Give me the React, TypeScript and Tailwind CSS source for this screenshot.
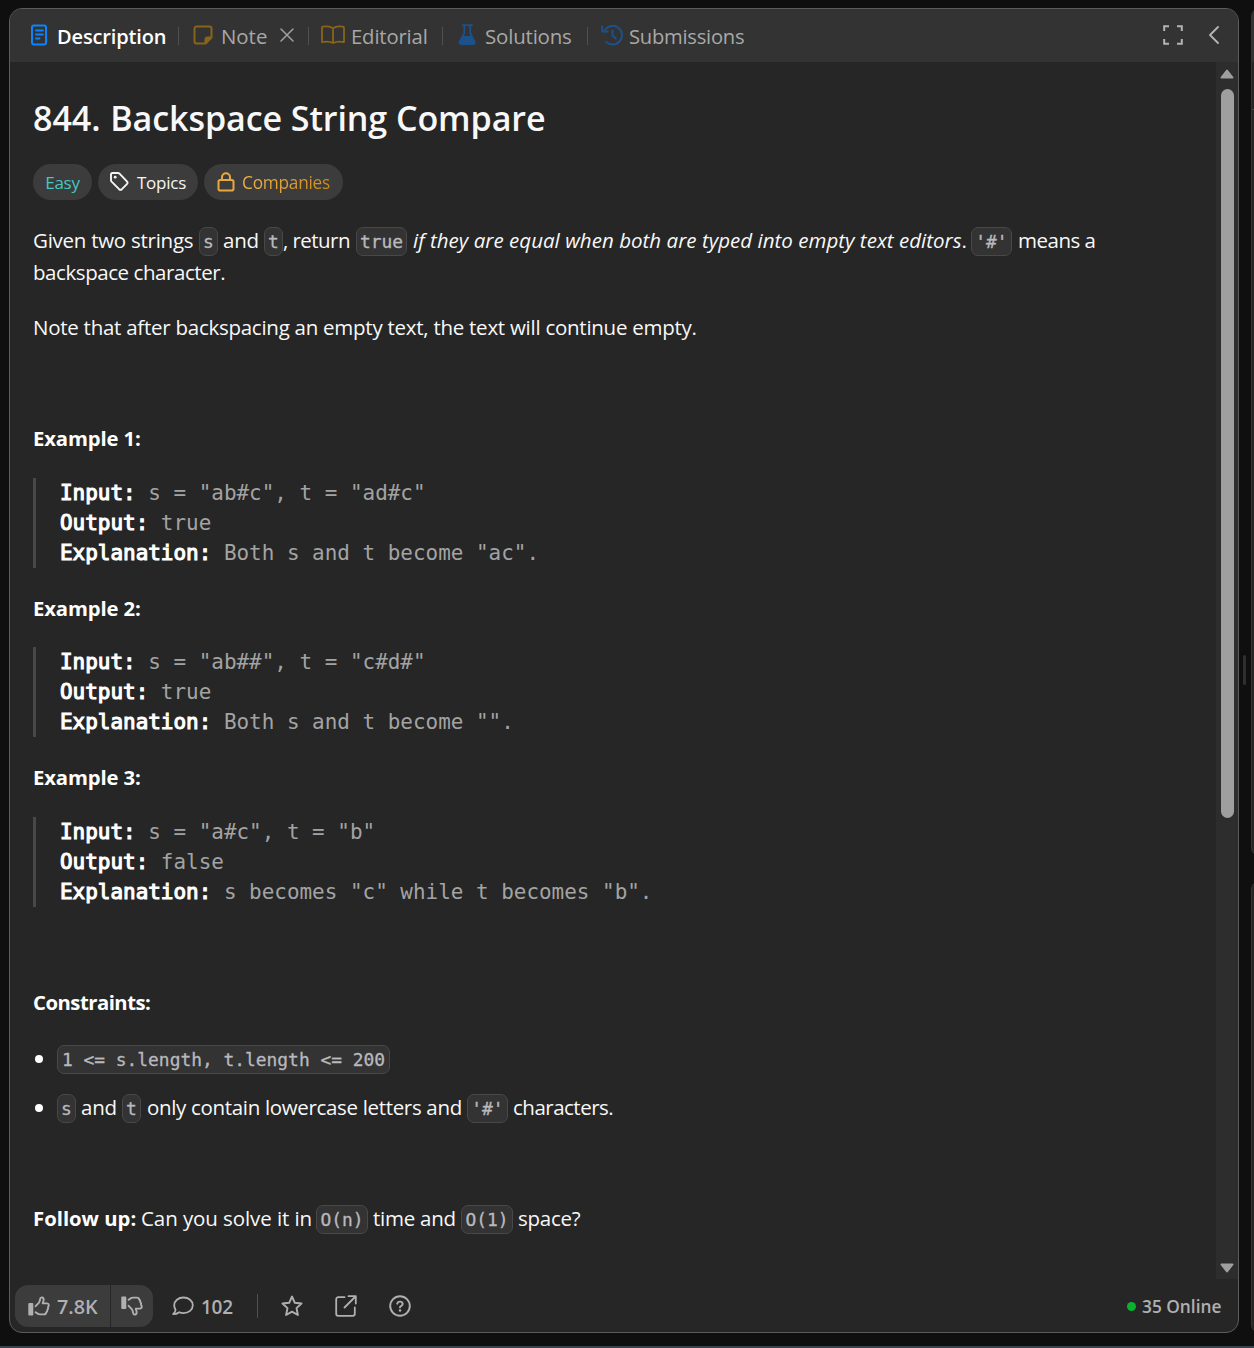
import React from "react";

type Kids = { children: React.ReactNode; className?: string };

const Code = ({ children, className = "" }: Kids) => (
  <code
    className={`mt-[2px] inline-flex h-[29px] shrink-0 items-center justify-center rounded-[7px] border border-[#484848] bg-[#333333] pt-[2px] font-['DejaVu_Sans_Mono',monospace] text-[17.9px] leading-none tracking-normal text-[#b9b9be] [-webkit-text-stroke:0.3px_#b9b9be] whitespace-pre ${className}`}
  >
    {children}
  </code>
);

const Line = ({ children, className = "" }: Kids) => (
  <div className={`flex h-8 items-center whitespace-pre leading-8 ${className}`}>{children}</div>
);

const Heading = ({ children, className = "" }: Kids) => (
  <p className={`h-8 text-[20.3px] font-bold leading-8 tracking-[-0.12px] text-white ${className}`}>{children}</p>
);

const Example = ({ rows, className = "" }: { rows: [string, string][]; className?: string }) => (
  <pre
    className={`h-[90px] border-l-[3px] border-[#484848] pl-6 font-['DejaVu_Sans_Mono',monospace] text-[20.95px] leading-[30px] tracking-normal text-[#a3a3a3] ${className}`}
  >
    {rows.map(([label, value]) => (
      <div key={label}>
        <span className="text-white [-webkit-text-stroke:1.1px_#fff]">{label}</span> {value}
      </div>
    ))}
  </pre>
);

const Sep = ({ className = "" }: { className?: string }) => (
  <div className={`h-[18px] w-px shrink-0 bg-[#515151] ${className}`} />
);

const Svg = ({ w, h, className = "", children }: Kids & { w: number; h: number }) => (
  <svg
    width={w}
    height={h}
    viewBox={`0 0 ${w} ${h}`}
    fill="none"
    stroke="currentColor"
    strokeWidth="2"
    strokeLinecap="round"
    strokeLinejoin="round"
    className={`shrink-0 ${className}`}
  >
    {children}
  </svg>
);

const Tab = ({ children, className = "" }: Kids) => (
  <span className={`shrink-0 whitespace-nowrap pt-[2px] text-[#a8a8a8] ${className}`}>{children}</span>
);

const ThumbUp = ({ className = "" }: { className?: string }) => (
  <Svg w={22} h={20} className={className}>
    <rect x="0.3" y="7" width="5" height="12.5" rx="1" fill="currentColor" stroke="none" />
    <path
      d="M7.6 10.2 L11 6.6 Q11.9 5.2 12 3.4 Q12.4 1.1 14.2 1.4 Q16 2 15.6 4.4 L14.7 7.4 H19 Q20.8 7.6 20.8 9.2 Q20.8 10.4 20 11 Q20.6 13 19.3 13.9 Q19.6 15.8 18.2 16.4 Q18 18.4 16 18.4 H12.2 Q10.6 18.3 9.4 17.4 L7.6 16.2"
      strokeWidth="1.9"
    />
  </Svg>
);

function Header() {
  return (
    <header className="flex h-[53px] shrink-0 items-center bg-[#333333] pl-[21px] pr-[18px]">
      <Svg w={17} h={22} className="-mt-[2px] text-[#0a84ff]">
        <rect x="1" y="1.5" width="14" height="19" rx="2" />
        <path d="M5 6.5h7M5 10.5h7M5 14.5h3.5" strokeWidth="1.8" />
      </Svg>
      <Tab className="ml-[9px] w-[121px] text-[20px] font-semibold tracking-[-0.15px] !text-white">Description</Tab>
      <Sep />
      <Svg w={20} h={20} className="ml-[14px] -mt-[1px] text-[#896419]">
        <path d="M3.5 1.5h13a2 2 0 0 1 2 2v9l-6 6h-9a2 2 0 0 1-2-2v-13a2 2 0 0 1 2-2z" />
        <path d="M12.5 18v-3.5a2 2 0 0 1 2-2H18z" fill="currentColor" />
      </Svg>
      <Tab className="ml-[8px] w-[59px] text-[20.4px]">Note</Tab>
      <Svg w={14} h={14} className="-mt-[1px] text-[#a0a0a0]">
        <path d="M1 1l12 12M13 1L1 13" strokeWidth="1.5" />
      </Svg>
      <Sep className="ml-[14px]" />
      <Svg w={24} h={20} className="ml-[12px] -mt-[1px] text-[#896419]">
        <path
          d="M12 3.2v14.6M12 3.2C9.5 1.4 5 1.2 2.2 1.7a1.2 1.2 0 0 0-1.2 1.2v14.2c3.5-.8 8-.6 11 .9 3-1.5 7.5-1.7 11-.9V2.9a1.2 1.2 0 0 0-1.2-1.2C19 1.2 14.5 1.4 12 3.2z"
          strokeWidth="1.8"
        />
      </Svg>
      <Tab className="ml-[6px] w-[91px] text-[20.3px] tracking-[-0.15px]">Editorial</Tab>
      <Sep />
      <Svg w={18} h={22} className="ml-[15px] -mt-[2px] text-[#1d5189]">
        <path d="M4.5 1.2h9.5M6.3 1.5v7.5L1.3 18.5M12.2 1.5v7.5l4.7 9.5" strokeWidth="1.8" />
        <path d="M4.6 12.5h9.2l3 5.8q.7 2.3-1.6 2.3H2.900q-2.300 0-1.600-2.300z" fill="currentColor" strokeWidth="1" />
      </Svg>
      <Tab className="ml-[9px] w-[102px] text-[20.5px] tracking-[-0.2px]">Solutions</Tab>
      <Sep />
      <Svg w={22} h={22} className="ml-[13px] -mt-[2px] text-[#1d5189]">
        <path d="M4.3 5.5a9.300 9.300 0 1 1 1.100 12.500M1.200 2.300v5.300h5.500M11.500 6.500v5l3.300 3" />
      </Svg>
      <Tab className="ml-[6px] text-[20.2px] tracking-[-0.25px]">Submissions</Tab>
      <Svg w={20} h={20} className="ml-auto -mt-[1px] text-[#b4b4b4]">
        <path d="M1.200 6V1.200H6M14 1.200h4.800V6M18.800 14v4.800H14M6 18.800H1.200V14" strokeLinecap="butt" strokeLinejoin="miter" />
      </Svg>
      <Svg w={12} h={18} className="ml-[25px] -mt-[1px] text-[#b4b4b4]">
        <path d="M10 1L2 9l8 8" strokeWidth="1.8" />
      </Svg>
    </header>
  );
}

function Footer() {
  return (
    <footer className="flex h-[53px] shrink-0 items-start pl-[5px] pr-[17px] pt-[6px] text-[#b0b0b0]">
      <div className="flex h-[42px] overflow-hidden rounded-[13px]">
        <div className="flex w-[95px] items-center bg-[#3c3c3c] pl-[13px]">
          <ThumbUp />
          <span className="ml-[7px] pt-[2px] text-[19.8px] font-semibold">7.8K</span>
        </div>
        <div className="ml-px flex w-[42px] items-center bg-[#3c3c3c] pl-[10px]">
          <ThumbUp className="-scale-y-100" />
        </div>
      </div>
      <div className="flex h-[42px] flex-1 items-center">
        <Svg w={22} h={20} className="ml-[19px]">
          <path
            d="M11.500 1.500c5.200 0 9.300 3.400 9.300 7.800s-4.100 7.800-9.300 7.800c-1.600 0-3-.3-4.300-.9-1.500 1.200-3.500 2-6 2 1.200-1.200 2.200-2.800 2.400-4.300-.9-1.300-1.400-2.900-1.400-4.600 0-4.400 4.100-7.800 9.300-7.800z"
            strokeWidth="1.8"
          />
        </Svg>
        <span className="ml-[7px] w-[56px] pt-[2px] text-[19px] font-semibold tracking-[-0.3px]">102</span>
        <div className="h-6 w-px bg-[#515151]" />
        <Svg w={22} h={22} className="ml-[23px]">
          <path d="M11 1.5l2.8 6.3 6.7.7-5 4.6 1.400 6.900L11 16.600 5.100 20l1.400-6.900-5-4.600 6.700-.7z" strokeWidth="1.9" />
        </Svg>
        <Svg w={22} h={22} className="ml-[32px]">
          <path
            d="M9.500 2.200H3.200a2 2 0 0 0-2 2v14.600a2 2 0 0 0 2 2h14.600a2 2 0 0 0 2-2v-6.300M13.500 1.200h7.300v7.300M20.500 1.500L9.500 12.500"
            strokeWidth="1.8"
          />
        </Svg>
        <Svg w={22} h={22} className="ml-[32px]">
          <circle cx="11" cy="11" r="9.8" strokeWidth="1.9" />
          <path d="M8.300 8.700q.3-2.100 2.700-2.100t2.700 2.200q0 1.300-1.400 2-1.300.6-1.300 1.600" strokeWidth="1.9" />
          <circle cx="11" cy="15.4" r="1.25" fill="currentColor" stroke="none" />
        </Svg>
        <span className="ml-auto mr-[6px] h-[9px] w-[9px] rounded-full bg-[#09b32d]" />
        <span className="w-[79px] whitespace-nowrap pt-[2px] text-[17.3px] font-semibold">35 Online</span>
      </div>
    </footer>
  );
}

function Scrollbar() {
  return (
    <div className="flex w-[22px] shrink-0 flex-col items-center bg-[#2d2d2d] pt-[6px] pb-[5px] text-[#9f9f9f]">
      <Svg w={16} h={12}>
        <path d="M8 2.500L13.500 9.500H2.500z" fill="currentColor" />
      </Svg>
      <div className="mt-[9px] h-[729px] w-[13px] rounded-full bg-[#9f9f9f]" />
      <Svg w={16} h={12} className="mt-auto">
        <path d="M8 9.500L13.500 2.500H2.500z" fill="currentColor" />
      </Svg>
    </div>
  );
}

function Tags() {
  return (
    <div className="mt-[24px] flex h-9 gap-[6px] text-[17px]">
      <span className="flex w-[59px] items-center justify-center rounded-full bg-[#3c3c3c] pt-[2px] text-[#46c6c2]">
        Easy
      </span>
      <span className="flex w-[100px] items-center rounded-full bg-[#3c3c3c] pl-[12px] text-[#f5f5f5]">
        <Svg w={19} h={19} className="-mt-[1px]">
          <path
            d="M1 2.400v5.800q0 .8.6 1.500l7.500 7.500q1.400 1.300 2.800 0l5-5q1.300-1.400 0-2.800L9.500 1.700Q8.800 1 8 1H2.400Q1 1 1 2.400z"
            strokeWidth="1.9"
          />
          <circle cx="5.2" cy="5.2" r="1.4" fill="currentColor" stroke="none" />
        </Svg>
        <span className="ml-[8px] pt-[2px]">Topics</span>
      </span>
      <span className="flex w-[139px] items-center rounded-full bg-[#3c3c3c] pl-[13px]">
        <Svg w={18} h={20} className="text-[#eaa83c]">
          <rect x="1.500" y="8" width="15" height="10.500" rx="1.800" />
          <path d="M5 8V5.200a4 4 0 0 1 8 0V8" />
        </Svg>
        <span className="ml-[7px] bg-gradient-to-r from-[#f5b44b] to-[#cf8a14] bg-clip-text pt-[2px] text-[17.3px] text-transparent">
          Companies
        </span>
      </span>
    </div>
  );
}

function Problem() {
  return (
    <main className="min-w-0 flex-1 pl-[23px] text-[20.5px] tracking-[-0.26px] text-[#f8f8f8]">
      <h1 className="mt-[32px] h-[46px] whitespace-nowrap text-[34.1px] font-semibold leading-[48px] tracking-[-0.1px]">
        844.<span className="ml-[1px]"> Backspace String Compare</span>
      </h1>
      <Tags />
      <div className="mt-[24px]">
        <Line>
          <span className="w-[166px]">Given two strings</span>
          <Code className="w-[19px]">s</Code>
          <span className="ml-[5px] w-[41px]">and</span>
          <Code className="w-[19px]">t</Code>
          <span className="w-[73px] tracking-[-0.55px]">, return</span>
          <Code className="w-[51px]">true</Code>
          <span className="ml-[6px] w-[558px]">
            <em className="tracking-[0.03px]">if they are equal when both are typed into empty text editors</em>.
          </span>
          <Code className="w-[41px]">'#'</Code>
          <span className="ml-[6px] tracking-[-0.5px]">means a</span>
        </Line>
        <Line className="tracking-[-0.43px]">backspace character.</Line>
      </div>
      <Line className="mt-[23px]">Note that after backspacing an empty text, the text will continue empty.</Line>
      <Heading className="mt-[79px]">Example 1:</Heading>
      <Example
        className="mt-[24px]"
        rows={[
          ["Input:", 's = "ab#c", t = "ad#c"'],
          ["Output:", "true"],
          ["Explanation:", 'Both s and t become "ac".'],
        ]}
      />
      <Heading className="mt-[24px]">Example 2:</Heading>
      <Example
        className="mt-[23px]"
        rows={[
          ["Input:", 's = "ab##", t = "c#d#"'],
          ["Output:", "true"],
          ["Explanation:", 'Both s and t become "".'],
        ]}
      />
      <Heading className="mt-[24px]">Example 3:</Heading>
      <Example
        className="mt-[24px]"
        rows={[
          ["Input:", 's = "a#c", t = "b"'],
          ["Output:", "false"],
          ["Explanation:", 's becomes "c" while t becomes "b".'],
        ]}
      />
      <Heading className="mt-[79px] !tracking-[-0.5px]">Constraints:</Heading>
      <ul className="mt-[24px] flex flex-col gap-[17px]">
        <li>
          <Line>
            <span className="ml-[2px] mr-[14px] mt-[2px] h-2 w-2 rounded-full bg-white" />
            <Code className="w-[333px]">{"1 <= s.length, t.length <= 200"}</Code>
          </Line>
        </li>
        <li>
          <Line>
            <span className="ml-[2px] mr-[14px] mt-[2px] h-2 w-2 rounded-full bg-white" />
            <Code className="w-[19px]">s</Code>
            <span className="ml-[5px] w-[41px]">and</span>
            <Code className="w-[19px]">t</Code>
            <span className="ml-[6px] w-[320px] tracking-[-0.33px]">only contain lowercase letters and</span>
            <Code className="w-[41px]">'#'</Code>
            <span className="ml-[5px] tracking-[-0.5px]">characters.</span>
          </Line>
        </li>
      </ul>
      <Line className="mt-[79px]">
        <b className="w-[108px] text-[20.3px] tracking-normal text-white">Follow up:</b>
        <span className="w-[175px] tracking-[-0.08px]">Can you solve it in</span>
        <Code className="w-[52px]">O(n)</Code>
        <span className="ml-[5px] w-[88px]">time and</span>
        <Code className="w-[52px]">O(1)</Code>
        <span className="ml-[5px]">space?</span>
      </Line>
    </main>
  );
}

export default function App() {
  return (
    <div className="flex h-[1348px] w-[1254px] flex-col overflow-hidden bg-[#0f0f0f] font-['Open_Sans','Noto_Sans',sans-serif]">
      <div className="flex h-[1346px] pl-[9px] pt-[8px]">
        <section className="flex h-[1325px] w-[1230px] shrink-0 flex-col overflow-hidden rounded-[13px] border border-[#5c5c5c] bg-[#262626]">
          <Header />
          <div className="flex min-h-0 flex-1">
            <Problem />
            <Scrollbar />
          </div>
          <Footer />
        </section>
        <div className="ml-[4px] mt-[647px] h-[30px] w-[3px] shrink-0 rounded-full bg-[#2f2f2f]" />
        <div className="ml-[5px] flex w-[16px] shrink-0 flex-col">
          <div className="flex h-[848px] flex-col overflow-hidden rounded-[13px] border border-[#333] bg-[#262626]">
            <div className="h-[53px] bg-[#333333]" />
            <div className="h-[48px] border-b border-[#484848]" />
          </div>
          <div className="mt-[25px] h-[452px] rounded-[13px] border border-[#333] bg-[#262626]" />
        </div>
      </div>
      <div className="h-[2px] bg-[#3a4450]" />
    </div>
  );
}
